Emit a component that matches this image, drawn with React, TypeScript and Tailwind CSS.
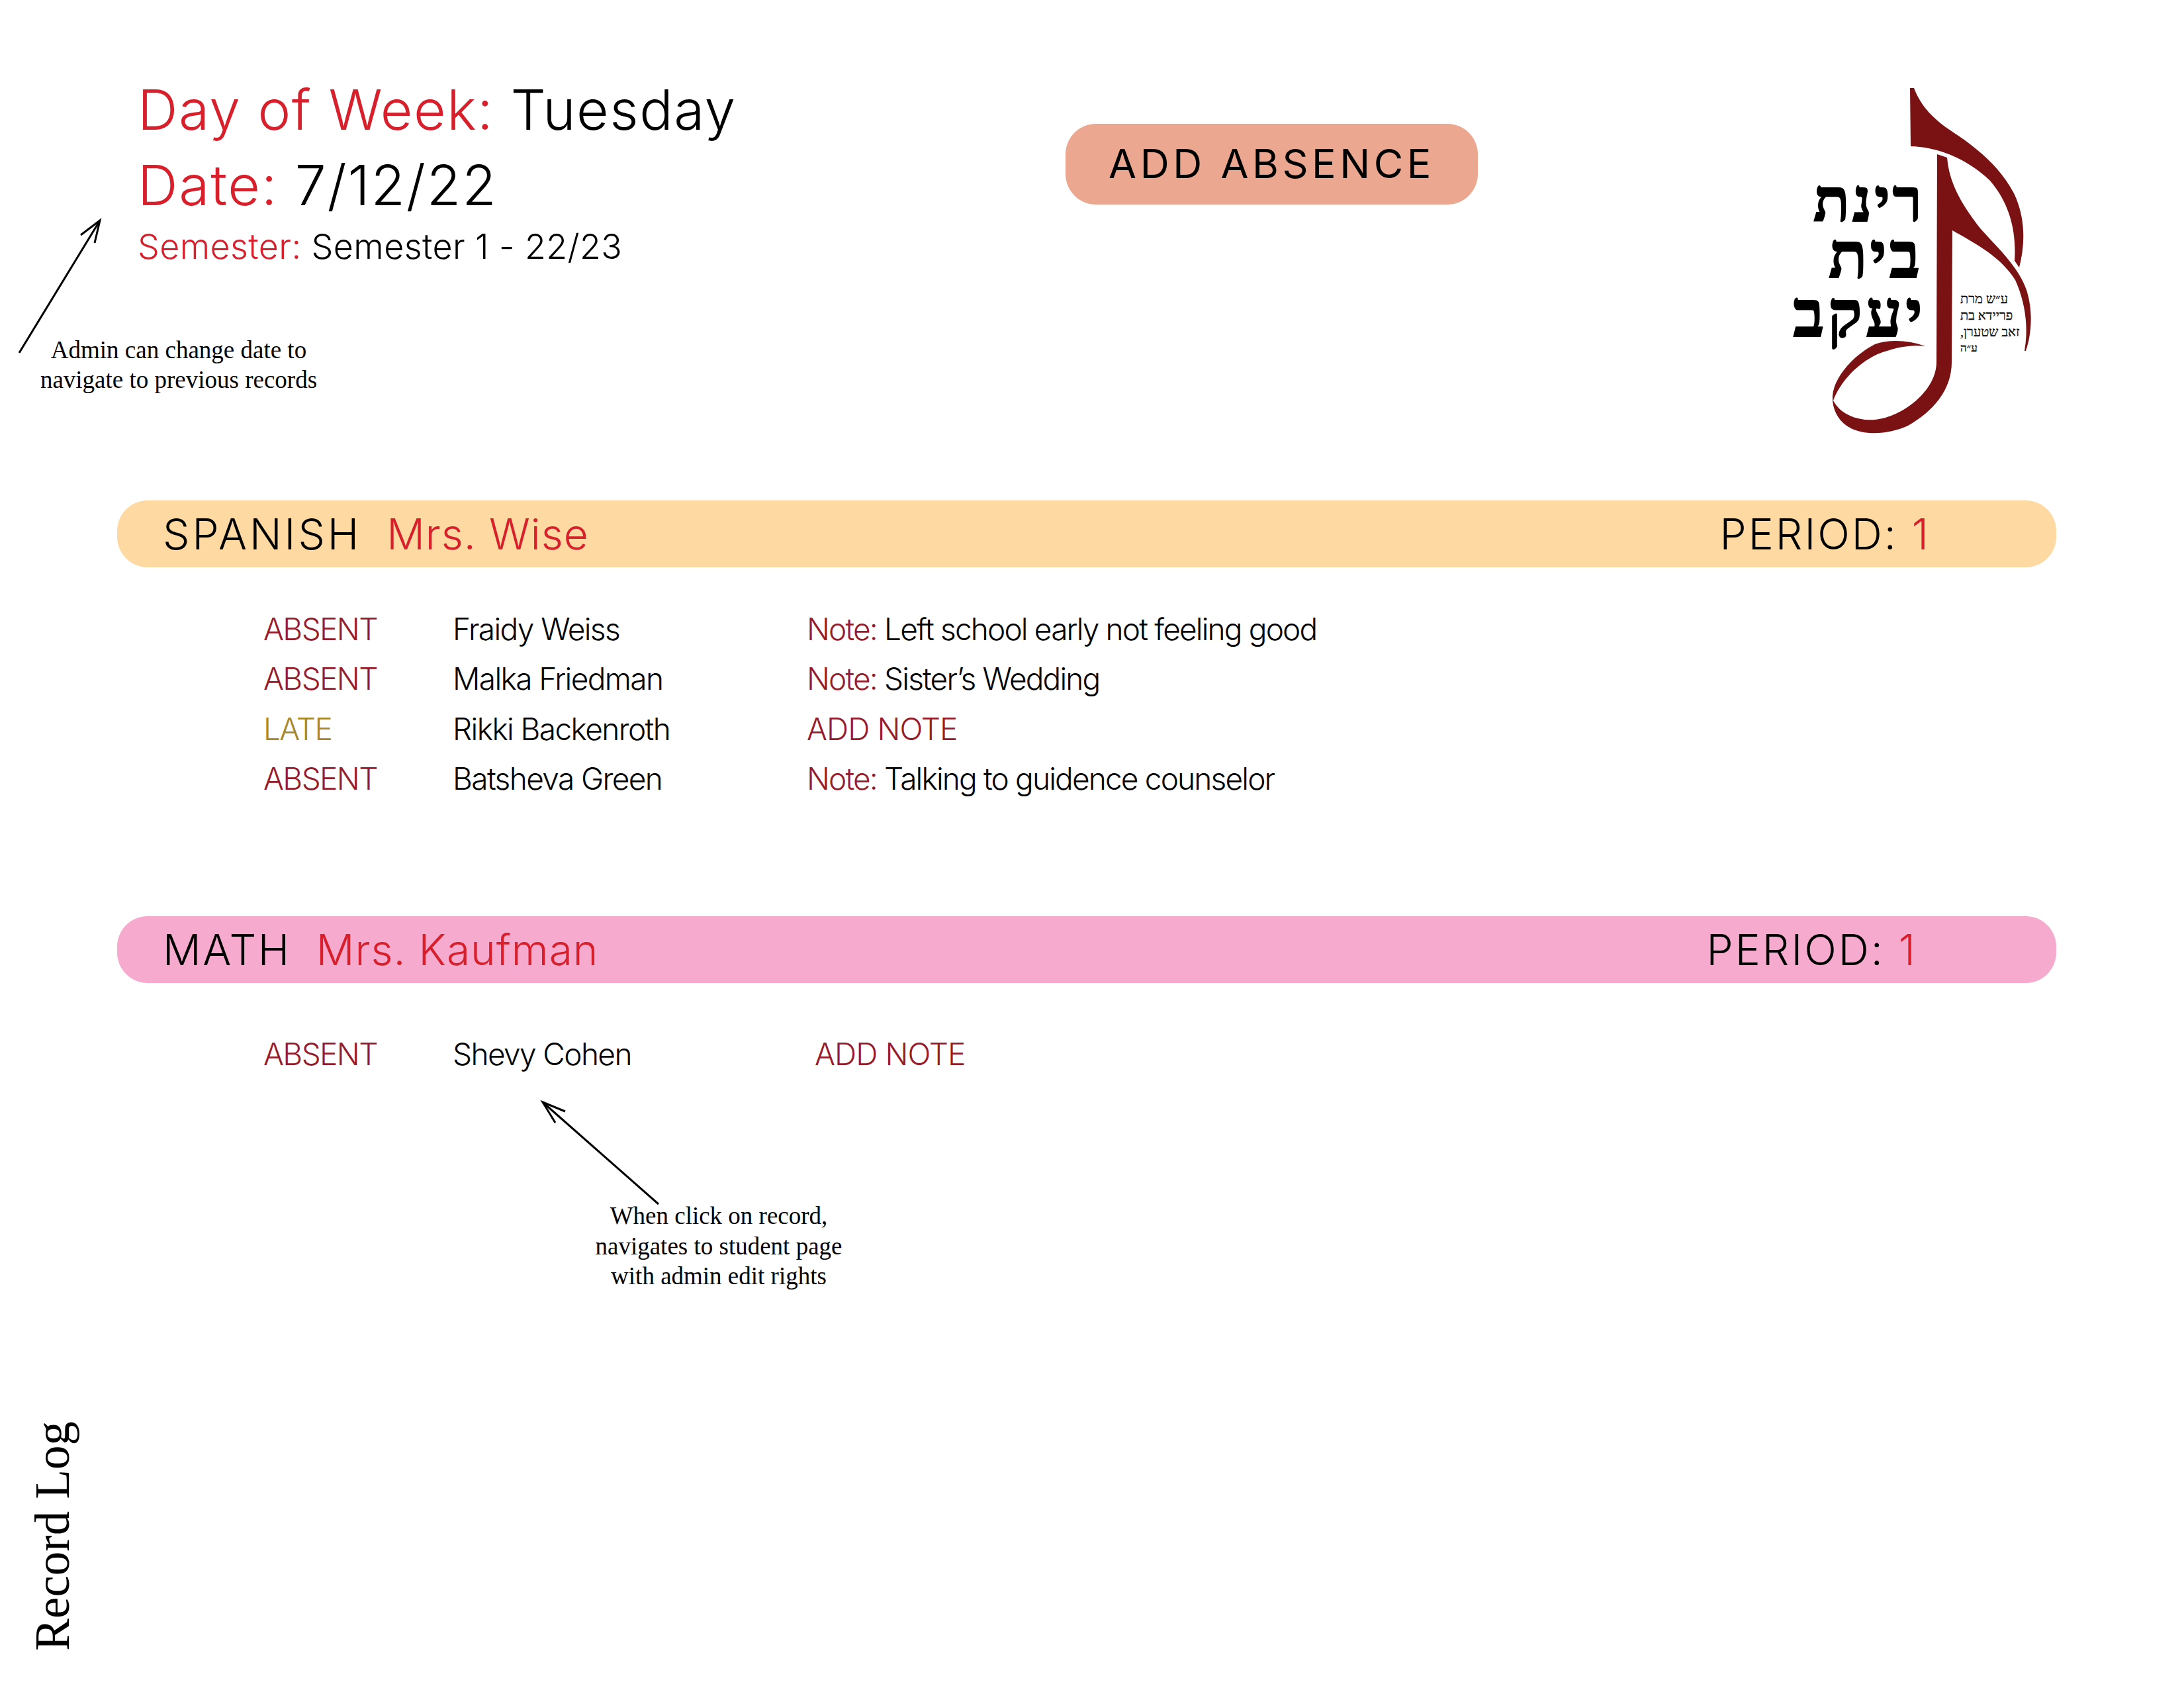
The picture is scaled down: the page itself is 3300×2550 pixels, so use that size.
const red = "text-[#d7202c]"
const maroon = "text-[#971c2b]"
const serif = "font-['Liberation_Serif',serif]"

const Logo = () => (
  <svg width="480" height="600" viewBox="0 0 480 600" className="shrink-0">
    <g fill="#7a1214">
      <path d="M246 33 L252 33 C263 62 283 81 310 99 C350 125 383 154 403 192 C418 223 422 262 411 304 L404 294 C407 250 397 208 367 173 C337 144 293 122 247 121 Z" />
      <path d="M287 133 L302 138 C305 173 320 204 353 246 C383 279 410 304 422 338 C432 369 430 404 421 430 L419 430 C425 396 421 358 405 323 C383 288 347 269 310 248 L309 447 C309 490 280 522 243 543 C215 556 175 560 150 543 C135 532 128 515 129 498 C131 470 160 437 193 420 C215 412 245 414 269 423 C245 420 220 426 197 435 C165 450 140 478 130 505 C140 525 165 536 193 534 C235 530 286 490 286 447 Z" />
    </g>
    <g direction="rtl" fontFamily="'Liberation Serif',serif" fontWeight="700" fill="#000" stroke="#000" strokeWidth="2">
      <text x="268" y="234" fontSize="90" textAnchor="start" letterSpacing="4">רינת</text>
      <text x="265" y="319" fontSize="96" textAnchor="start" letterSpacing="4">בית</text>
      <text x="270" y="408" fontSize="98" textAnchor="start" letterSpacing="5">יעקב</text>
    </g>
    <g direction="rtl" fontFamily="'Liberation Serif',serif" fill="#111" stroke="#111" strokeWidth="0.3" fontSize="20">
      <text x="322" y="358" textAnchor="end">ע״ש מרת</text>
      <text x="322" y="383" textAnchor="end">פריידא בת</text>
      <text x="322" y="408" textAnchor="end">זאב שטערן,</text>
      <text x="322" y="431" textAnchor="end" fontSize="17">ע״ה</text>
    </g>
  </svg>
)

const DateArrow = () => (
  <svg className="absolute left-0 top-0" width="200" height="560" fill="none" stroke="#000" strokeWidth="3">
    <path d="M29 533 L151 333" />
    <path d="M122 355 L151 333 L143 367" />
  </svg>
)

const RecordArrow = () => (
  <svg className="absolute left-[800px] top-[1650px]" width="220" height="190" fill="none" stroke="#000" strokeWidth="3">
    <path d="M195 169 L20 15" />
    <path d="M54 29 L20 15 L39 46" />
  </svg>
)

const Row = ({ status, name, note, noteClass = "" }: { status: string; name: string; note?: string; noteClass?: string }) => (
  <div className="grid grid-cols-[286px_535px_1fr] h-[75.3px] items-center text-[46px] font-light tracking-[-0.035em] whitespace-nowrap">
    <div className={status === "LATE" ? "text-[#a8872a]" : maroon}>{status}</div>
    <div className="text-black">{name}</div>
    {note ? (
      <div className="text-black tracking-[-0.04em]"><span className={maroon}>Note:</span> {note}</div>
    ) : (
      <div className={`${maroon} tracking-[-0.02em] ${noteClass}`}>ADD NOTE</div>
    )}
  </div>
)

const Bar = ({ color, subject, subjectClass, teacher, periodClass }: { color: string; subject: string; subjectClass: string; teacher: string; periodClass: string }) => (
  <div className={`ml-[177px] w-[2930px] h-[101px] rounded-[46px] ${color} flex items-center pl-[69px] text-[64px] font-light whitespace-nowrap ${periodClass}`}>
    <span className={`text-black ${subjectClass}`}>{subject}</span>
    <span className={`ml-[38px] ${red} tracking-[1px]`}>{teacher}</span>
    <span className="ml-auto text-black tracking-[3px]">PERIOD:<span className={red}> 1</span></span>
  </div>
)

export default function App() {
  return (
    <div className="relative w-[3300px] h-[2550px] bg-white overflow-hidden font-['Inter',sans-serif]">
      <div className="flex items-start h-[756px]">
        <div className="w-[1610px] shrink-0 pl-[208px] pt-[118px] font-light whitespace-nowrap">
          <div className={`text-[84px] leading-[96px] tracking-[1.5px] ${red}`}>Day of Week: <span className="text-black">Tuesday</span></div>
          <div className={`mt-[18px] text-[84px] leading-[96px] tracking-[1.8px] ${red}`}>Date: <span className="text-black">7/12/22</span></div>
          <div className={`mt-[14px] text-[52px] leading-[62px] tracking-[0.4px] ${red}`}>Semester: <span className="text-black">Semester 1 - 22/23</span></div>
        </div>
        <div className="mt-[187px] w-[623px] h-[122px] shrink-0 rounded-[46px] bg-[#eba78f] flex items-center justify-center text-[61px] tracking-[5.5px] text-black whitespace-nowrap">ADD ABSENCE</div>
        <div className="ml-[407px] mt-[100px]"><Logo /></div>
      </div>

      <Bar color="bg-[#fed9a1]" subject="SPANISH" subjectClass="tracking-[4px]" teacher="Mrs. Wise" periodClass="pr-[190px]" />
      <div className="ml-[398px] mt-[56px]">
        <Row status="ABSENT" name="Fraidy Weiss" note="Left school early not feeling good" />
        <Row status="ABSENT" name="Malka Friedman" note="Sister’s Wedding" />
        <Row status="LATE" name="Rikki Backenroth" />
        <Row status="ABSENT" name="Batsheva Green" note="Talking to guidence counselor" />
      </div>

      <div className="mt-[170px]">
        <Bar color="bg-[#f6abce]" subject="MATH" subjectClass="tracking-[2.6px]" teacher="Mrs. Kaufman" periodClass="pr-[210px]" />
      </div>
      <div className="ml-[398px] mt-[70px]">
        <Row status="ABSENT" name="Shevy Cohen" noteClass="ml-[12px]" />
      </div>

      <DateArrow />
      <RecordArrow />
      <div className={`absolute left-[30px] top-[506px] w-[480px] text-center ${serif} text-[37px] leading-[45px] text-black`}>
        Admin can change date to<br />navigate to previous records
      </div>
      <div className={`absolute left-[836px] top-[1814px] w-[500px] text-center ${serif} text-[37px] leading-[45.5px] text-black`}>
        When click on record,<br />navigates to student page<br />with admin edit rights
      </div>
      <div className={`absolute left-[36px] bottom-[56px] [writing-mode:vertical-rl] rotate-180 ${serif} text-[73px] leading-[88px] text-black`}>Record Log</div>
    </div>
  )
}
